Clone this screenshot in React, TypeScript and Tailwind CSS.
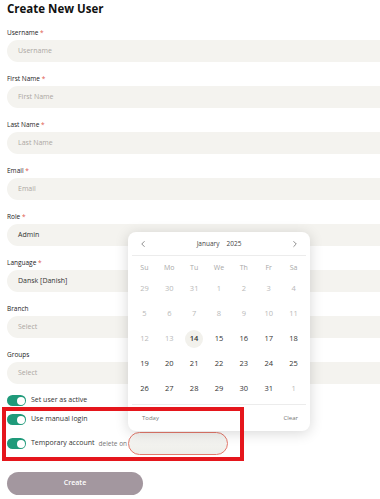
import { ChevronLeft, ChevronRight } from "lucide-react";

const fields = [
  { label: "Username", required: true, value: "", placeholder: "Username" },
  { label: "First Name", required: true, value: "", placeholder: "First Name" },
  { label: "Last Name", required: true, value: "", placeholder: "Last Name" },
  { label: "Email", required: true, value: "", placeholder: "Email" },
  { label: "Role", required: true, value: "Admin", placeholder: "" },
  { label: "Language", required: true, value: "Dansk [Danish]", placeholder: "" },
  { label: "Branch", required: false, value: "", placeholder: "Select" },
  { label: "Groups", required: false, value: "", placeholder: "Select" },
];

const weekDays = ["Su", "Mo", "Tu", "We", "Th", "Fr", "Sa"];

// muted = outside month or before today
const weeks: { d: number; muted: boolean }[][] = [
  [29, 30, 31, 1, 2, 3, 4].map((d) => ({ d, muted: true })),
  [5, 6, 7, 8, 9, 10, 11].map((d) => ({ d, muted: true })),
  [12, 13, 14, 15, 16, 17, 18].map((d) => ({ d, muted: d < 14 })),
  [19, 20, 21, 22, 23, 24, 25].map((d) => ({ d, muted: false })),
  [26, 27, 28, 29, 30, 31, 1].map((d, i) => ({ d, muted: i === 6 })),
];

function Toggle() {
  return (
    <div className="w-[19px] h-[11px] rounded-full bg-[#1f9a7a] flex items-center justify-end px-[1.5px] shrink-0">
      <div className="w-[8px] h-[8px] rounded-full bg-white" />
    </div>
  );
}

function Calendar() {
  return (
    <div className="absolute left-[128px] top-[232px] w-[182px] h-[199px] bg-white rounded-[8px] shadow-[0_2px_14px_rgba(0,0,0,0.16)] px-[4px]">
      <div className="h-[24px] flex items-center justify-between pl-[6px] pr-[6px] border-b border-[#ececec]">
        <ChevronLeft size={10} strokeWidth={1.6} className="text-[#555]" />
        <div className="text-[6.5px] text-[#444] flex gap-[7px]">
          <span>January</span>
          <span>2025</span>
        </div>
        <ChevronRight size={10} strokeWidth={1.6} className="text-[#555]" />
      </div>
      <div className="pt-[4px] border-b border-[#ececec] pb-[3px]">
        <div className="grid grid-cols-7 h-[16px] items-center text-[7px] text-[#a8a8a8] text-center">
          {weekDays.map((w) => (
            <span key={w}>{w}</span>
          ))}
        </div>
        {weeks.map((row, ri) => (
          <div key={ri} className="grid grid-cols-7 h-[25px] items-center text-[7.5px] text-center">
            {row.map((c, ci) => (
              <div key={ci} className="flex justify-center">
                {c.d === 14 && !c.muted ? (
                  <span className="w-[18px] h-[18px] rounded-full bg-[#f2f1ec] flex items-center justify-center text-[#333] font-semibold">
                    {c.d}
                  </span>
                ) : (
                  <span className={c.muted ? "text-[#b9b9b9]" : "text-[#333]"}>{c.d}</span>
                )}
              </div>
            ))}
          </div>
        ))}
      </div>
      <div className="h-[26px] flex items-center justify-between pl-[10px] pr-[8px] text-[6px] text-[#777]">
        <span>Today</span>
        <span>Clear</span>
      </div>
    </div>
  );
}

export default function App() {
  return (
    <div
      className="relative w-[380px] h-[499px] overflow-hidden bg-white"
      style={{ fontFamily: '"Open Sans", "Liberation Sans", sans-serif' }}
    >
      <div className="pl-[7px]">
        <h1 className="h-[18px] leading-[18px] text-[11.5px] font-bold text-[#111]">Create New User</h1>

        <div className="mt-[10px] flex flex-col gap-[12px]">
          {fields.map((f) => (
            <div key={f.label}>
              <label className="block h-[9px] leading-[9px] text-[6.5px] font-medium text-[#222] mb-[3px]">
                {f.label}
                {f.required && <span className="text-[#e05a4f]"> *</span>}
              </label>
              <div className="w-[400px] h-[22px] rounded-l-full bg-[#f4f3ef] flex items-center pl-[11px] text-[7px]">
                {f.value ? (
                  <span className="text-[#333]">{f.value}</span>
                ) : (
                  <span className="text-[#aca7a2]">{f.placeholder}</span>
                )}
              </div>
            </div>
          ))}
        </div>

        <div className="mt-[11px] flex flex-col">
          <div className="h-[11px] flex items-center gap-[5px]">
            <Toggle />
            <span className="text-[7px] font-medium text-[#333]">Set user as active</span>
          </div>
          <div className="mt-[8px] h-[11px] flex items-center gap-[5px]">
            <Toggle />
            <span className="text-[7px] font-medium text-[#333]">Use manual login</span>
          </div>
          <div className="mt-[7px] h-[23px] flex items-center">
            <Toggle />
            <span className="ml-[5px] text-[7px] font-medium text-[#333]">Temporary account</span>
            <span className="ml-[4px] text-[6.5px] text-[#777]">delete on</span>
            <div className="ml-auto mr-[152px] w-[100px] h-[23px] rounded-full border border-[#e4786b] bg-gradient-to-b from-[#f7f7f4] to-[#eeeeea]" />
          </div>
        </div>

        <button className="mt-[17px] w-[136px] h-[23px] rounded-full bg-[#a3979f] text-white text-[7px] font-semibold">
          Create
        </button>
      </div>

      <Calendar />

      <div className="absolute left-[2px] top-[407px] w-[242px] h-[54px] border-[4px] border-[#e5161c]" />
    </div>
  );
}
